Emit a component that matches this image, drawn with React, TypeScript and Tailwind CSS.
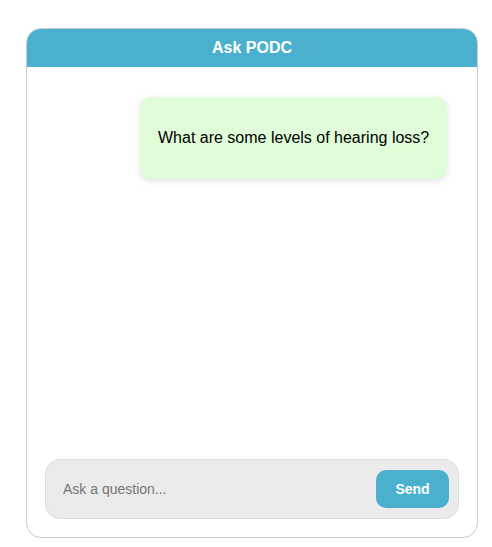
export default function App() {
  return (
    <div className="min-h-[547px] bg-white pt-[28px] pl-[26px] font-['Liberation_Sans',Arial,sans-serif]">
      <div className="flex h-[510px] w-[452px] flex-col overflow-hidden rounded-[15px] border border-[#cccccc] bg-white">
        {/* header */}
        <div className="flex h-[38px] items-center justify-center bg-[#4ab0ce] text-[16px] font-bold text-white">
          Ask PODC
        </div>

        {/* messages */}
        <div className="flex flex-1 flex-col items-end px-[30px] pt-[30px]">
          <div className="flex h-[82px] w-[307px] items-center whitespace-nowrap rounded-[10px] bg-[#e0fcd9] pl-[18px] text-[16px] text-black shadow-[0_2px_6px_rgba(0,0,0,0.12)]">
            What are some levels of hearing loss?
          </div>
        </div>

        {/* input */}
        <div className="px-[18px] pb-[18px]">
          <div className="flex h-[60px] items-center rounded-[15px] border border-[#dcdcdc] bg-[#ebebeb] pl-[17px] pr-[9px]">
            <input
              className="flex-1 bg-transparent text-[14px] text-black outline-none placeholder:text-[#757575]"
              placeholder="Ask a question..."
            />
            <button className="h-[38px] w-[73px] rounded-[10px] bg-[#4ab0ce] text-[14px] font-bold text-white">
              Send
            </button>
          </div>
        </div>
      </div>
    </div>
  );
}
